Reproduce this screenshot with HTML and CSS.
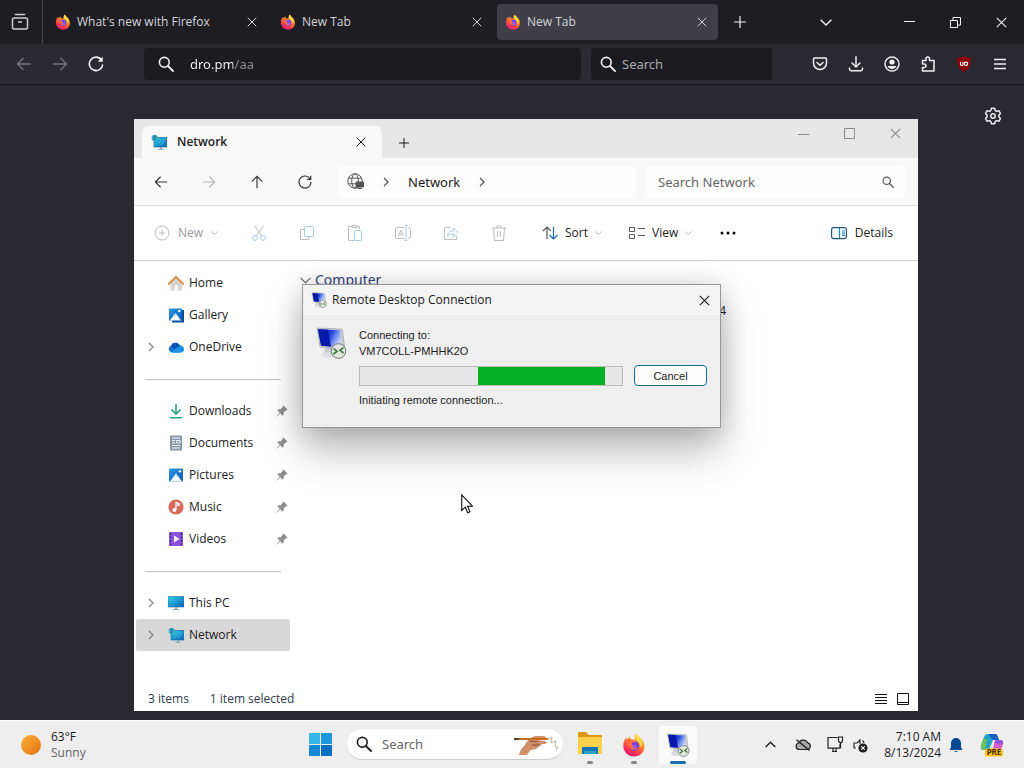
FILE: index.html
```html
<!DOCTYPE html>
<html lang="en">
<head>
<meta charset="utf-8">
<title>Desktop</title>
<link rel="stylesheet" href="styles.css">
</head>
<body>
<svg class="defs" aria-hidden="true">
  <defs>
    <linearGradient id="ffg" x1=".8" y1="0" x2=".3" y2="1"><stop offset="0" stop-color="#ffe14d"/><stop offset=".4" stop-color="#ff8a2a"/><stop offset=".75" stop-color="#f9374f"/><stop offset="1" stop-color="#d81b78"/></linearGradient>
    <linearGradient id="scr" x1="0" y1="0" x2="1" y2="1"><stop offset="0" stop-color="#2fd0e8"/><stop offset="1" stop-color="#0b63b5"/></linearGradient>
    <linearGradient id="rd" x1="0" y1="0" x2="1" y2=".4"><stop offset=".1" stop-color="#0a1fb0"/><stop offset=".55" stop-color="#2446dc"/><stop offset=".75" stop-color="#6d8bf0"/><stop offset="1" stop-color="#c8d4f8"/></linearGradient>
    <linearGradient id="pic" x1="0" y1="0" x2="1" y2="1"><stop offset="0" stop-color="#2a9be6"/><stop offset="1" stop-color="#0a55b0"/></linearGradient>
  </defs>
  <symbol id="x" viewBox="0 0 10 10"><path d="M.7.7l8.6 8.6M9.3.7L.7 9.3" fill="none" stroke="currentColor"/></symbol>
  <symbol id="plus" viewBox="0 0 12 12"><path d="M6 0v12M0 6h12" fill="none" stroke="currentColor" stroke-width="1.2"/></symbol>
  <symbol id="right" viewBox="0 0 6 10"><path d="M1 1l4 4-4 4" fill="none" stroke="currentColor" stroke-width="1.3"/></symbol>
  <symbol id="down" viewBox="0 0 12 7"><path d="M.7.7L6 6 11.300.7" fill="none" stroke="currentColor" stroke-width="1.4"/></symbol>
  <symbol id="find" viewBox="0 0 16 16"><circle cx="6.300" cy="6.300" r="4.900" fill="none" stroke="currentColor" stroke-width="1.600"/><path d="M10 10l5 5" stroke="currentColor" stroke-width="1.800" stroke-linecap="round"/></symbol>
  <symbol id="arrow" viewBox="0 0 16 16"><path d="M15 8H1.500M7.500 2l-6 6 6 6" fill="none" stroke="currentColor" stroke-width="1.300"/></symbol>
  <symbol id="firefox" viewBox="0 0 24 24"><path d="M14.500.8c1 1.700 2.800 3 4.200 4.700 1.700 1 3.500 3.900 3.700 7.500.3 6-4.300 10.500-10.300 10.500C6 23.500 1.300 19 1.300 12.800c0-3.500 1.100-6 2.700-8.300l1 2 3-3 .5 3c1.500-.5 3-.2 4 .5.300-2.500.5-4.500 2-6.200z" fill="url(#ffg)"/><path d="M14.500 1c-1.500 2-1.500 4 0 6 2 2 4.500 4 4 7.500 2-2 2.500-5 .5-8.500-1.500-2-3.500-3-4.500-5z" fill="#ffdc45"/><circle cx="12.200" cy="13" r="4.800" fill="#7542e5"/><path d="M5 7c3-1 7 0 8.500 2.200-3-.2-3.800 1-3.500 2 .8 2.300 4.500 1 5.500 4-4 3.500-8.500.5-9-3C6.300 10 6 8.500 5 7z" fill="#ff6b3d"/><circle cx="12.700" cy="13.800" r="1.900" fill="#8d5cf6"/></symbol>
  <symbol id="network" viewBox="0 0 16 16"><path d="M3 3.500h13V13H3z" fill="url(#scr)"/><path d="M3 3.500h13V13H3z" fill="none" stroke="#176aa3" stroke-width=".7"/><path d="M9 13h2v2h2v.8H7V15h2z" fill="#87a9b7"/><circle cx="3.700" cy="4" r="3.200" fill="#58bfd8"/><path d="M1 4h5.400M3.700 1v6M1.500 2.300h4.400M1.500 5.700h4.400" stroke="#147198" stroke-width=".7"/><path d="M7 10l4-5M10 11l4-6" stroke="#5bd0e8" stroke-width="1" opacity=".6"/></symbol>
  <symbol id="pc" viewBox="0 0 16 16"><path d="M0 1.500h16V12H0z" fill="url(#scr)" stroke="#176aa3" stroke-width=".6"/><path d="M7 12h2v2h2v1H5v-1h2z" fill="#8ea1ab"/></symbol>
  <symbol id="rdp" viewBox="0 0 32 32"><path d="M11 20l9 1 1 6H8z" fill="#c9ccd0"/><path d="M6 27c3-2 10-2 15 0l-2 3c-4 1-9 1-12-1z" fill="#dddfe2"/><path d="M2 1l24 1 1.500 1L30 23 5 20z" fill="#c6cad2" stroke="#8d9099" stroke-width=".5"/><path d="M3 2.300l22 1L27.500 21 6 18.500z" fill="url(#rd)"/><path d="M3 2.300l10 .5 3 17L6 18.500z" fill="#0719a8"/><circle cx="23.500" cy="24" r="7.300" fill="#e3e5df" stroke="#6f776e"/><path d="M18.500 21.500l3.500 2.800-3.500 2.700M28.500 20.500L25 23.300l3.500 2.700" fill="none" stroke="#39743b" stroke-width="1.600"/></symbol>
  <symbol id="picture" viewBox="0 0 16 16"><rect x="1" y="1.500" width="14" height="13" rx="1" fill="url(#pic)"/><path d="M2 14.500L8 6.500l6 8z" fill="#f1f9ff"/><path d="M8 6.500l1.500 2-2 1-2 0z" fill="#b5dcf7"/><circle cx="12" cy="4.300" r="1.300" fill="#fff"/></symbol>
  <symbol id="pin" viewBox="0 0 12 12"><path d="M7.500.8l3.700 3.700-1 .8-.6-.1-2.200 2.200.1 2-1 1L4.300 8 .7 11.500 4 7.700 1.600 5.300l1-1 2 .1 2.200-2.200-.1-.6z" fill="#8c8c8c" stroke="#8c8c8c" stroke-width=".4"/></symbol>
</svg>

<div class="desktop">
  <header class="browser">
    <div class="tabstrip">
      <button class="view" aria-label="Firefox View"><svg width="18" height="18" viewBox="0 0 18 18" fill="none" stroke="currentColor" stroke-width="1.500"><path d="M4.500 1.500h9" stroke-linecap="round"/><rect x="1.500" y="5" width="15" height="11" rx="1.500"/><path d="M7 9h4"/></svg></button>
      <nav class="tabs" aria-label="Tabs">
        <div class="tab"><svg class="i16"><use href="#firefox"/></svg><span>What's new with Firefox</span><button aria-label="Close tab"><svg class="i10"><use href="#x"/></svg></button></div>
        <div class="tab"><svg class="i16"><use href="#firefox"/></svg><span>New Tab</span><button aria-label="Close tab"><svg class="i10"><use href="#x"/></svg></button></div>
        <div class="tab active"><svg class="i16"><use href="#firefox"/></svg><span>New Tab</span><button aria-label="Close tab"><svg class="i10"><use href="#x"/></svg></button></div>
      </nav>
      <button class="newtab" aria-label="New tab"><svg class="i12"><use href="#plus"/></svg></button>
      <button class="alltabs" aria-label="List all tabs"><svg width="12" height="7"><use href="#down"/></svg></button>
      <div class="winbtns">
        <button aria-label="Minimize"><svg width="11" height="10"><path d="M0 4.500h11" stroke="currentColor"/></svg></button>
        <button aria-label="Restore"><svg width="11" height="11" fill="none" stroke="currentColor"><path d="M.5 3.500h7v7h-7zM3 3V.5h7.500V8H8"/></svg></button>
        <button aria-label="Close"><svg width="11" height="11"><use href="#x"/></svg></button>
      </div>
    </div>
    <div class="urlrow">
      <button class="dim" aria-label="Back"><svg class="i16"><use href="#arrow"/></svg></button>
      <button class="dim" aria-label="Forward"><svg class="i16 flip"><use href="#arrow"/></svg></button>
      <button aria-label="Reload"><svg width="16" height="16" viewBox="0 0 16 16" fill="none" stroke="currentColor" stroke-width="1.600"><path d="M13.500 4A6.700 6.700 0 1 0 14.700 8.500"/><path d="M14.800.8v5h-5z" fill="currentColor" stroke="none"/></svg></button>
      <label class="urlbar"><svg class="i16"><use href="#find"/></svg><input class="url" type="text" value="dro.pm/aa" aria-label="Address"></label>
      <label class="searchbar"><svg class="i16"><use href="#find"/></svg><input type="text" placeholder="Search" aria-label="Search"></label>
      <div class="tools">
        <button aria-label="Pocket"><svg width="16" height="16" viewBox="0 0 16 16" fill="none" stroke="currentColor" stroke-width="1.500" stroke-linecap="round"><path d="M2.500 2h11q1 0 1 1v4a6.500 6.500 0 0 1-13 0V3q0-1 1-1z"/><path d="M5 6.500l3 2.800 3-2.800"/></svg></button>
        <button aria-label="Downloads"><svg width="16" height="16" viewBox="0 0 16 16" fill="none" stroke="currentColor" stroke-width="1.500" stroke-linecap="round"><path d="M8 .8v9.700M4 7l4 4 4-4M1.500 12v1q0 1.700 1.700 1.700h9.600q1.700 0 1.700-1.700v-1"/></svg></button>
        <button aria-label="Account"><svg width="16" height="16" viewBox="0 0 16 16"><circle cx="8" cy="8" r="7" fill="none" stroke="currentColor" stroke-width="1.400"/><circle cx="8" cy="6" r="2.600" fill="currentColor"/><path d="M3.500 10h9c-1.500 4-7.500 4-9 0z" fill="currentColor"/></svg></button>
        <button aria-label="Extensions"><svg width="16" height="16" viewBox="0 0 16 16" fill="none" stroke="currentColor" stroke-width="1.500" stroke-linejoin="round"><path d="M6 4.500V3q0-2 1.800-2t1.700 2v1.500H14V15H2.500v-3.500H4q2 0 2-1.700T4 8H2.500V4.500z"/></svg></button>
        <button aria-label="uBlock Origin"><svg width="16" height="16" viewBox="0 0 16 16"><path d="M8 0c2 1.500 4.800 2 7 2.200 0 5.500-.5 10-7 13.800C1.500 12.200 1 7.700 1 2.200 3.200 2 6 1.500 8 0z" fill="#8b0710"/><path d="M4.500 6v2.500q0 1 1.200 1T7 8.500V6" fill="none" stroke="#fff" stroke-width="1.100"/><circle cx="10" cy="7.800" r="1.700" fill="none" stroke="#fff" stroke-width="1.100"/></svg></button>
        <button aria-label="Menu"><svg width="14" height="12"><path d="M1 1.500h12M1 6h12M1 10.500h12" stroke="currentColor" stroke-width="1.500"/></svg></button>
      </div>
    </div>
  </header>

  <main class="page">
    <button class="settings" aria-label="Personalize new tab"><svg width="18" height="18" viewBox="0 0 18 18" fill="none" stroke="currentColor" stroke-width="1.500" stroke-linejoin="round"><path d="M7.400 1.300h3.200l.6 2.200 1.500.9 2.200-.7 1.600 2.800-1.600 1.600v1.800l1.600 1.600-1.600 2.800-2.200-.7-1.500.9-.6 2.200H7.400l-.6-2.200-1.500-.9-2.200.7-1.600-2.800 1.600-1.600V8.100L1.500 6.500l1.600-2.800 2.200.7 1.500-.9z"/><circle cx="9" cy="9" r="2.200"/></svg></button>
  </main>

  <section class="explorer" aria-label="Network">
    <div class="ex-title">
      <div class="ex-tab"><svg class="i16"><use href="#network"/></svg><b>Network</b><button aria-label="Close tab"><svg class="i10"><use href="#x"/></svg></button></div>
      <button class="ex-new" aria-label="New tab"><svg class="i10"><use href="#plus"/></svg></button>
      <div class="ex-win">
        <button aria-label="Minimize"><svg width="11" height="11"><path d="M0 6.500h11" stroke="currentColor"/></svg></button>
        <button aria-label="Maximize"><svg width="11" height="11"><path d="M.5.500h10v10H.5z" fill="none" stroke="currentColor"/></svg></button>
        <button aria-label="Close"><svg width="11" height="11"><use href="#x"/></svg></button>
      </div>
    </div>
    <div class="ex-nav">
      <div class="ex-arrows">
        <button aria-label="Back"><svg class="i14"><use href="#arrow"/></svg></button>
        <button class="off" aria-label="Forward"><svg class="i14 flip"><use href="#arrow"/></svg></button>
        <button aria-label="Up"><svg class="i14 up"><use href="#arrow"/></svg></button>
        <button aria-label="Refresh"><svg class="i14" viewBox="0 0 14 14" fill="none" stroke="currentColor" stroke-width="1.200"><path d="M12.200 4A6 6 0 1 0 13 7M12.700.8V4.300H9.200"/></svg></button>
      </div>
      <div class="address">
        <svg width="17" height="17" viewBox="0 0 17 17" fill="none" stroke="#555"><circle cx="8" cy="8" r="7.200"/><ellipse cx="8" cy="8" rx="3.300" ry="7.200"/><path d="M1.500 5.200h13M1.500 10.800h8"/><path d="M9 9h7.500v5H9zM11 15.500h4" fill="#555"/></svg>
        <svg class="sep"><use href="#right"/></svg>
        <a href="#">Network</a>
        <svg class="sep"><use href="#right"/></svg>
      </div>
      <label class="ex-search"><input type="text" placeholder="Search Network" aria-label="Search Network"><svg class="i12"><use href="#find"/></svg></label>
    </div>
    <div class="ex-tools">
      <button class="off new"><svg class="i16" viewBox="0 0 16 16" fill="none" stroke="currentColor"><circle cx="8" cy="8" r="7"/><path d="M8 5v6M5 8h6"/></svg><span>New</span><svg class="chev"><use href="#down"/></svg></button>
      <div class="file-ops">
        <button class="off" aria-label="Cut"><svg class="i16" viewBox="0 0 16 16" fill="none" stroke="currentColor"><path d="M3.500.5l7 10.500M12.500.5l-7 10.500"/><circle cx="4" cy="13" r="2.400" stroke="#a9cbe2"/><circle cx="12" cy="13" r="2.400" stroke="#a9cbe2"/></svg></button>
        <button class="off" aria-label="Copy"><svg class="i16" viewBox="0 0 16 16" fill="none" stroke="currentColor"><rect x="5.500" y="1.500" width="9" height="10" rx="1" stroke="#a9cbe2"/><path d="M5 4.500H1.500v10H10v-2.500"/></svg></button>
        <button class="off" aria-label="Paste"><svg class="i16" viewBox="0 0 16 16" fill="none" stroke="currentColor"><path d="M7 15.500H1.500v-14H5M10 1.500h2.500V4M5 .5h5v2H5z"/><rect x="7.500" y="5.500" width="7" height="10" rx="1" stroke="#a9cbe2"/></svg></button>
        <button class="off" aria-label="Rename"><svg class="i16" viewBox="0 0 16 16" fill="none" stroke="currentColor"><path d="M9 2.500H2q-1.500 0-1.500 1.500v8q0 1.500 1.500 1.500h7M13 2.500q2.500 0 2.500 2v7q0 2-2.500 2M3.500 11l2.500-6 2.500 6M4.500 9h3"/><path d="M11 0v16M9.500.5h3M9.500 15.500h3" stroke="#a9cbe2"/></svg></button>
        <button class="off" aria-label="Share"><svg class="i16" viewBox="0 0 16 16" fill="none" stroke="currentColor"><path d="M7 2.500H1.500v12h12V11"/><path d="M4.500 11c.5-4 3-5 6-5V3l4.500 4.500L10.500 12V9c-2.500 0-4 0-6 2z" stroke="#a9cbe2"/></svg></button>
        <button class="off" aria-label="Delete"><svg class="i16" viewBox="0 0 16 16" fill="none" stroke="currentColor"><path d="M1 3h14M5.500 3q0-2.500 2.500-2.500T10.500 3M2.500 3l1 12.500h9l1-12.500M6.500 6v6M9.500 6v6"/></svg></button>
      </div>
      <button class="menu"><svg class="i16" viewBox="0 0 16 16" fill="none" stroke="#555" stroke-width="1.200"><path d="M5 14V2M1 6l4-4 4 4"/><path d="M11.500 2v12M7.500 10l4 4 4-4" stroke="#1769b5"/></svg><span>Sort</span><svg class="chev"><use href="#down"/></svg></button>
      <button class="menu"><svg class="i16" viewBox="0 0 16 16" fill="none" stroke="#555"><path d="M.5 2.500h5v4h-5zM.5 9.500h5v4h-5zM9 3.500h7M9 10.500h7"/></svg><span>View</span><svg class="chev"><use href="#down"/></svg></button>
      <button class="more" aria-label="See more"><svg width="16" height="4"><circle cx="2" cy="2" r="1.500"/><circle cx="8" cy="2" r="1.500"/><circle cx="14" cy="2" r="1.500"/></svg></button>
      <button class="details"><svg class="i16" viewBox="0 0 16 16" fill="none" stroke="#255979" stroke-width="1.200"><rect x=".6" y="2.600" width="14.800" height="11" rx="2"/><path d="M8.500 3v10.500M11 6h3M11 8.200h3M11 10.400h3" stroke="#1586cd"/></svg><span>Details</span></button>
    </div>
    <div class="ex-body">
      <nav class="side" aria-label="Folders">
        <a href="#"><i></i><svg class="i16"><path d="M2.500 8v7.500H7V10h2.500v5.500H14V8L8 3z" fill="#d9d4cf"/><path d="M1 8.800L8 2l7 6.800" fill="none" stroke="#d9944d" stroke-width="2.200" stroke-linecap="round"/></svg><span>Home</span></a>
        <a href="#"><i></i><svg class="i16"><path d="M4 3h12v12.500H4z" fill="#074e9e"/><use href="#picture" width="15" height="15"/></svg><span>Gallery</span></a>
        <a href="#"><i><svg class="sep"><use href="#right"/></svg></i><svg class="i16"><path d="M3.500 13.500A3.500 3.500 0 0 1 3 6.800 5 5 0 0 1 12 6.500a3.600 3.600 0 0 1 .5 7z" fill="#1275d8"/><path d="M4 13.500l7-6.500c3-1 5 1 5 3.500 0 2-1.500 3-3 3z" fill="#1f8fe8"/><path d="M3 6.800A5 5 0 0 1 12 6.500L6 10z" fill="#0b52ae"/></svg><span>OneDrive</span></a>
        <hr>
        <a href="#"><i></i><svg class="i16" fill="none" stroke="#26a884" stroke-width="1.600"><path d="M8 1v10M3.500 6.500L8 11l4.500-4.500M2 14.700h12"/></svg><span>Downloads</span><svg class="pin"><use href="#pin"/></svg></a>
        <a href="#"><i></i><svg class="i16"><path d="M2 .5h12v15H2z" fill="#8a9aa5"/><path d="M4 3h8M4 5.500h3M4 8h3M4 10.500h8M4 13h8M8.500 5.500H12v2.500H8.500z" stroke="#f4f8fa" fill="none"/></svg><span>Documents</span><svg class="pin"><use href="#pin"/></svg></a>
        <a href="#"><i></i><svg class="i16"><use href="#picture"/></svg><span>Pictures</span><svg class="pin"><use href="#pin"/></svg></a>
        <a href="#"><i></i><svg class="i16"><circle cx="8" cy="8" r="7.600" fill="#d8695a"/><path d="M8 11V3.500l3 1v2L9 6" fill="none" stroke="#fff" stroke-width="1.300"/><circle cx="6.500" cy="11" r="2" fill="#fff"/></svg><span>Music</span><svg class="pin"><use href="#pin"/></svg></a>
        <a href="#"><i></i><svg class="i16"><rect x="1" y="1" width="14" height="14" rx="1" fill="#8a55dc"/><path d="M2.500 2v12M13.500 2v12" stroke="#4a2b95" stroke-width="1.500" stroke-dasharray="2 1.500"/><path d="M6 4.500l5.500 3.500L6 11.500z" fill="#f6efff"/></svg><span>Videos</span><svg class="pin"><use href="#pin"/></svg></a>
        <hr>
        <a href="#"><i><svg class="sep"><use href="#right"/></svg></i><svg class="i16"><use href="#pc"/></svg><span>This PC</span></a>
        <a href="#" class="sel"><i><svg class="sep"><use href="#right"/></svg></i><svg class="i16"><use href="#network"/></svg><span>Network</span></a>
      </nav>
      <div class="files">
        <h2><svg class="grp"><use href="#down"/></svg>Computer</h2>
        <div class="name">4</div>
      </div>
    </div>
    <footer class="status"><span>3 items</span><span>1 item selected</span>
      <div class="layouts">
        <button aria-label="Details view"><svg width="12" height="12"><path d="M0 1.500h12M0 4.500h12M0 7.500h12M0 10.500h12" stroke="currentColor"/></svg></button>
        <button aria-label="Large icons view"><svg width="12" height="12"><path d="M.5.500h11v11H.5zM1 9.500h10" fill="none" stroke="currentColor"/></svg></button>
      </div>
    </footer>
  </section>

  <section class="dialog" role="dialog" aria-label="Remote Desktop Connection">
    <div class="dlg-title"><svg class="i16"><use href="#rdp"/></svg><span>Remote Desktop Connection</span><button aria-label="Close"><svg width="11" height="11"><use href="#x"/></svg></button></div>
    <div class="dlg-body">
      <svg class="i32"><use href="#rdp"/></svg>
      <div class="dlg-main">
        <p>Connecting to:<br>VM7COLL-PMHHK2O</p>
        <div class="dlg-row"><div class="bar" role="progressbar" aria-label="Connecting"><div class="fill"></div></div><button class="cancel">Cancel</button></div>
        <p>Initiating remote connection...</p>
      </div>
    </div>
  </section>

  <footer class="taskbar">
    <button class="weather"><svg width="20" height="20"><defs><linearGradient id="sun" x1="0" y1="0" x2="1" y2="1"><stop offset="0" stop-color="#f5b13a"/><stop offset="1" stop-color="#e8720e"/></linearGradient></defs><circle cx="10" cy="10" r="10" fill="url(#sun)"/></svg><span class="temp">63°F<br><small>Sunny</small></span></button>
    <div class="apps">
      <button class="start" aria-label="Start"><svg width="24" height="24"><path d="M0 0h11v11H0z" fill="#35b5e8"/><path d="M12 0h11v11H12z" fill="#1c98dc"/><path d="M0 12h11v11H0z" fill="#1489d8"/><path d="M12 12h11v11H12z" fill="#0671c4"/></svg></button>
      <label class="tb-search"><svg class="i16"><use href="#find"/></svg><input type="text" placeholder="Search" aria-label="Search Windows"><svg width="46" height="26" viewBox="0 0 46 26"><path d="M6 24c1-5 3-7 6-10 2-4 5-8 11-9l8 0c3 1 3 3-1 3.500l-4 1 6 .5c3 1 2 3-1 3l-4 .5c-2 5-7 5-10 6l-3 4.500z" fill="#cf9068"/><path d="M16 10l9 1M19 14l9 0" stroke="#8c5132" stroke-width="1.200"/><path d="M1 8l30 0 4 0" stroke="#c46d24" stroke-width="2"/><path d="M1 8l5 0" stroke="#56433b" stroke-width="2"/><path d="M35 8l4-2-1 6 5-2-1 6 3 0-2 3" fill="none" stroke="#c2b6a2"/></svg></label>
      <button class="app" aria-label="File Explorer"><svg width="26" height="26" viewBox="0 0 26 26"><path d="M1 2q0-1 1-1h7l3 3h12q1 0 1 1v16H1z" fill="#dc9716"/><path d="M1 6h24v16q0 1-1 1H2q-1 0-1-1z" fill="#ffd04a"/><path d="M5 17q0-1 1-1h14q1 0 1 1v6H5z" fill="#1474b8"/><path d="M7 20h12v3H7z" fill="#2f9fc6"/></svg></button>
      <button class="app" aria-label="Firefox"><svg width="24" height="24"><use href="#firefox"/></svg></button>
      <button class="app on" aria-label="Remote Desktop Connection"><svg width="24" height="24"><use href="#rdp"/></svg></button>
    </div>
    <div class="tray">
      <button class="t-up" aria-label="Show hidden icons"><svg width="11" height="7" class="vflip"><use href="#down"/></svg></button>
      <button class="t-cloud" aria-label="OneDrive"><svg width="16" height="12" viewBox="0 0 16 12"><path d="M4 10.500a3.300 3.300 0 0 1-.3-6.500 5 5 0 0 1 9-.2 3.400 3.400 0 0 1-.7 6.700z" fill="#aaa" stroke="#222" stroke-width="1.200"/><path d="M1.500.7l13 10.800" stroke="#222" stroke-width="1.400"/></svg></button>
      <button class="t-net" aria-label="Network status"><svg width="17" height="17" fill="none" stroke="#222" stroke-width="1.200"><path d="M10.500 1.500H1v10.700h12V8M5 15.500h5M6 12.500v3M9 12.500v3M13.500 7v5M11.500 1h4v3.500q0 2-2 2t-2-2z"/></svg></button>
      <button class="t-vol" aria-label="Volume muted"><svg width="16" height="16"><path d="M7 3L4 6H1v5h2M7 2v5M9.500 3.500q1.500 1 1.500 2.500" fill="none" stroke="#222" stroke-width="1.100"/><circle cx="10" cy="11" r="4.600" fill="#222"/><path d="M8.300 9.300l3.400 3.400M11.700 9.300l-3.400 3.400" stroke="#fff" stroke-width="1.100"/></svg></button>
      <button class="clock"><time datetime="2024-08-13T07:10">7:10 AM<br>8/13/2024</time></button>
      <button class="t-bell" aria-label="Notifications"><svg width="14" height="16"><path d="M2 6a5 5 0 0 1 10 0v4l1.500 3H.5L2 10z" fill="#064a94"/><path d="M5 14h4q-2 2-4 0z" fill="#064a94"/></svg></button>
      <button aria-label="Copilot preview"><svg width="24" height="24" viewBox="0 0 24 24"><path d="M8 1h7q2 0 2.500 2L19 7h-6L9 17H4q-4 0-3-4L4 4q1-3 4-3z" fill="#23a4c7"/><path d="M8 1h7q2 0 2.500 2L19 7h-6z" fill="#1b5fc5"/><path d="M1 12l2-6 4 0-2 11H4q-4 0-3-5z" fill="#69c25d"/><path d="M15 7h5q4 0 3 4l-2 6q-1 3-4 3H9q3-1 4-5z" fill="#d260cb"/><path d="M14 10l3-3 3 0q4 0 3 4z" fill="#8857dc"/><rect x="5" y="15.500" width="18" height="8" rx="2" fill="#ffc31f"/><text x="14" y="22" class="pre">PRE</text></svg></button>
    </div>
  </footer>

  <svg class="cursor" width="12" height="20"><path d="M.7.900v15.500l3.600-3.300 2.400 5.700 2.300-1-2.400-5.500h5z" fill="#fff" stroke="#111" stroke-width="1.100"/></svg>
</div>
</body>
</html>
```
FILE: styles.css
```css
* { box-sizing: border-box; }
body { margin: 0; font: 12px/16px "Open Sans", "Noto Sans", sans-serif; color: #1b1b1b; }
button, input { font: inherit; color: inherit; background: none; border: 0; padding: 0; margin: 0; }
button { display: flex; align-items: center; justify-content: center; }
input { min-width: 0; flex: 1; outline: 0; }
a { color: inherit; text-decoration: none; }
svg { display: block; flex: none; }
.defs { position: absolute; width: 0; height: 0; }
.i10 { width: 10px; height: 10px; }
.i12 { width: 12px; height: 12px; }
.i14 { width: 14px; height: 14px; }
.i16 { width: 16px; height: 16px; }
.i32 { width: 32px; height: 32px; }
.flip { transform: scaleX(-1); }
.vflip { transform: scaleY(-1); }
.up { transform: rotate(90deg); }
.desktop { position: relative; display: flex; flex-direction: column; min-height: 100vh; overflow: hidden; background: #2a292f; }
.urlbar, .searchbar, .ex-nav, .tb-search { font-family: "Noto Sans", "Open Sans", sans-serif; font-size: 13px; }

/* browser */
.browser { color: #f0f0f4; }
.tabstrip { display: flex; height: 44px; background: #1e1d22; }
.view { width: 43px; border-right: 1px solid #48474f; color: #cfcfd6; padding-right: 2px; }
.tabs { display: flex; flex: 0 1 675px; gap: 4px; padding: 4px 0 4px 4px; min-width: 0; }
.tab { display: flex; flex: 1; align-items: center; gap: 6px; padding: 0 11px 0 8px; border-radius: 4px; color: #d4d4da; min-width: 0; }
.tab span { flex: 1; white-space: nowrap; overflow: hidden; }
.tab.active { background: #403f48; }
.newtab { width: 43px; }
.alltabs { width: 42px; margin-left: auto; }
.winbtns { display: flex; margin-left: 39px; }
.winbtns button { width: 46px; }
.urlrow { display: flex; align-items: center; height: 41px; padding: 0 6px; background: #2b2a30; border-bottom: 1px solid #141318; }
.urlrow button { width: 36px; height: 32px; }
.urlrow .dim { color: #77767c; }
.urlbar, .searchbar { display: flex; align-items: center; height: 32px; border-radius: 4px; background: #1c1b20; }
.urlbar { flex: 1; margin-left: 30px; padding-left: 14px; gap: 16px; }
.url { color: transparent; background: linear-gradient(90deg, #fbfbfe 43px, #8f8e95 43px); -webkit-background-clip: text; background-clip: text; }
.searchbar { flex: 0 1 181px; margin-left: 10px; padding-left: 9px; gap: 6px; min-width: 0; }
.searchbar input::placeholder { color: #a9a8ae; opacity: 1; }
.tools { display: flex; margin-left: 30px; }
.page { flex: 1; display: flex; justify-content: flex-end; padding: 22px 22px; }
.settings { height: 18px; color: #e9e9ee; }

/* file explorer window */
.explorer { position: absolute; left: 134px; top: 119px; width: 784px; display: flex; flex-direction: column; background: #fff; }
.ex-title { display: flex; height: 39px; background: #e7e7e7; }
.ex-tab { display: flex; align-items: center; gap: 10px; width: 240px; margin: 7px 0 0 8px; padding: 0 16px 0 9px; border-radius: 7px 7px 0 0; background: #f9f9f9; }
.ex-tab b { flex: 1; font-weight: 600; }
.ex-new { width: 44px; padding-top: 8px; }
.ex-win { display: flex; margin-left: auto; height: 28px; color: #8a8a8a; }
.ex-win button { width: 46px; }
.ex-nav { display: flex; align-items: center; height: 48px; padding-right: 13px; background: #f8f8f8; border-bottom: 1px solid #dcdcdc; }
.ex-arrows { display: flex; padding-left: 3px; }
.ex-arrows button { width: 48px; height: 32px; color: #333; }
.ex-arrows .off { color: #b5b5b5; }
.address { display: flex; align-items: center; flex: 1; gap: 19px; height: 32px; margin-left: 8px; padding-left: 10px; background: #fdfdfd; border-radius: 4px; }
.sep { width: 6px; height: 10px; color: #555; }
.ex-search { display: flex; align-items: center; flex: 0 1 259px; height: 32px; margin-left: 10px; padding: 0 11px 0 12px; background: #fdfdfd; border-radius: 4px; color: #555; }
.ex-search input::placeholder { color: #666; opacity: 1; }
.ex-tools { display: flex; align-items: center; height: 55px; padding: 0 25px 0 20px; border-bottom: 1px solid #cdcdcd; }
.ex-tools button { height: 32px; }
.ex-tools .off { color: #bcbcbc; }
.ex-tools .off span { color: #9a9a9a; }
.chev { width: 7px; height: 4px; color: #aaa; }
.new { gap: 8px; width: 61px; justify-content: flex-start; }
.file-ops { display: flex; margin-left: 20px; }
.file-ops button { width: 48px; }
.menu { gap: 7px; width: 87px; justify-content: flex-start; }
.file-ops + .menu { margin-left: 19px; }
.more { width: 24px; }
.details { margin-left: auto; gap: 8px; }
.ex-body { display: flex; height: 425px; }
.side { width: 166px; padding: 6px 10px 0 2px; }
.side a { display: flex; align-items: center; height: 32px; padding-right: 2px; }
.side a svg.i16 { margin-right: 5px; }
.side i { display: flex; justify-content: center; width: 30px; margin-right: 2px; }
.side i svg { color: #858585; }
.side span { flex: 1; }
.side .pin { width: 12px; height: 12px; }
.side .sel { background: #d8d8d8; border-radius: 2px; }
.side hr { height: 1px; margin: 16px 9px 15px; border: 0; background: #c2c2c2; }
.files { flex: 1; padding-top: 9px; }
.files h2 { display: flex; align-items: center; gap: 4px; margin: 0; font: 400 14px/20px "Noto Sans", "Open Sans", sans-serif; color: #35417a; }
.grp { width: 11px; height: 7px; color: #777; }
.name { width: 426px; padding-top: 13px; text-align: right; }
.status { display: flex; align-items: center; gap: 21px; height: 25px; padding: 0 9px 0 14px; color: #2f3b4c; }
.layouts { display: flex; gap: 10px; margin-left: auto; color: #111; }

/* connection dialog */
.dialog { position: absolute; left: 302px; top: 284px; width: 419px; background: #efefef; border: 1px solid #979797; box-shadow: 0 22px 38px rgba(0,0,0,.28), 0 0 24px rgba(0,0,0,.14); }
.dlg-title { display: flex; align-items: center; gap: 5px; height: 30px; padding: 0 10px 0 8px; background: #f3f3f3; }
.dlg-title span { flex: 1; }
.dlg-body { display: flex; gap: 12px; padding: 12px 13px 19px 12px; }
.dlg-main { flex: 1; font-family: "Liberation Sans", Arial, sans-serif; font-size: 11px; }
.dlg-main p { margin: 0; }
.dlg-row { display: flex; align-items: center; gap: 11px; margin: 6px 0; }
.bar { flex: 1; height: 20px; background: #e6e6e6; border: 1px solid #bcbcbc; }
.fill { width: 127px; height: 18px; margin-left: 45%; background: #06b025; }
.cancel { width: 73px; height: 21px; background: #fdfdfd; border: 1px solid #146a94; border-radius: 4px; }

/* taskbar */
.taskbar { display: grid; grid-template-columns: 1fr auto 1fr; align-items: center; height: 48px; background: #eee; border-top: 1px solid #fafafa; }
.weather { justify-self: start; gap: 10px; padding-left: 21px; text-align: left; }
.weather small { font-size: 12px; color: #666; }
.apps { display: flex; align-items: center; padding-right: 18px; }
.start { margin-right: 14px; }
.tb-search { display: flex; align-items: center; gap: 10px; width: 216px; height: 31px; margin-right: 8px; padding: 0 4px 0 9px; border-radius: 16px; background: #fff; border-bottom: 1px solid #ccc; }
.tb-search input { width: 100px; }
.tb-search input::placeholder { color: #666; opacity: 1; }
.app { width: 38px; height: 38px; margin-right: 6px; flex-direction: column; justify-content: flex-end; gap: 4px; border-radius: 4px; }
.app::after { content: ""; width: 6px; height: 3px; border-radius: 2px; background: #888; }
.app.on { margin-right: 0; background: #fafafa; }
.app.on::after { width: 16px; background: #176fae; }
.tray { display: flex; align-items: center; justify-self: end; padding-right: 20px; }
.t-up { margin-right: 19px; }
.t-cloud { margin-right: 16px; }
.t-net { margin-right: 9px; }
.t-vol { margin-right: 15px; }
.clock { text-align: right; margin-right: 8px; }
.t-bell { margin-right: 17px; }
.pre { font: 700 8px "Noto Sans", sans-serif; text-anchor: middle; fill: #4a2b00; }
.cursor { position: absolute; left: 461px; top: 494px; }
```
